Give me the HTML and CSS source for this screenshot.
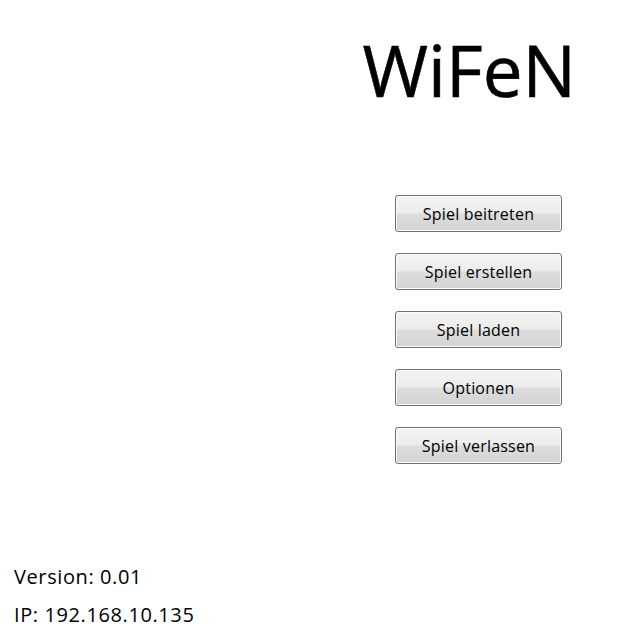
FILE: index.html
```html
<!DOCTYPE html>
<html>
<head>
<meta charset="utf-8">
<link rel="stylesheet" href="styles.css">
</head>
<body>
<div class="screen">
  <header class="head">
    <h1 class="title">WiFeN</h1>
  </header>
  <nav class="menu">
    <button class="btn">Spiel beitreten</button>
    <button class="btn">Spiel erstellen</button>
    <button class="btn">Spiel laden</button>
    <button class="btn">Optionen</button>
    <button class="btn">Spiel verlassen</button>
  </nav>
  <footer class="info">
    <div class="line">Version: 0.01</div>
    <div class="line">IP: 192.168.10.135</div>
  </footer>
</div>
</body>
</html>
```
FILE: styles.css
```css
html, body {
  margin: 0;
  padding: 0;
  background: #ffffff;
}
.screen {
  width: 618px;
  height: 644px;
  display: flex;
  flex-direction: column;
  font-family: "Open Sans", "DejaVu Sans", sans-serif;
  color: #000;
}
.head {
  display: flex;
  justify-content: flex-end;
  padding: 22px 42px 0 0;
}
.title {
  margin: 0;
  font-size: 71px;
  font-weight: 400;
  line-height: 96px;
  letter-spacing: 0;
  -webkit-text-stroke: 0.6px #000;
}
.menu {
  display: flex;
  flex-direction: column;
  gap: 21px;
  margin: 77px 0 0 395px;
  width: 167px;
}
.btn {
  height: 37px;
  border: 1px solid #707070;
  border-radius: 3px;
  background: linear-gradient(to bottom, #f4f4f4 0%, #ececec 48%, #dddddd 52%, #d3d3d3 100%);
  box-shadow: inset 0 0 0 1px #fcfcfc;
  font-family: "Open Sans", "DejaVu Sans", sans-serif;
  font-size: 16px;
  color: #000;
  padding: 0;
  letter-spacing: 0.2px;
}
.info {
  margin-top: auto;
  padding: 0 0 10px 14px;
  display: flex;
  flex-direction: column;
}
.line {
  font-size: 20px;
  line-height: 38px;
  letter-spacing: 0.6px;
}
```
